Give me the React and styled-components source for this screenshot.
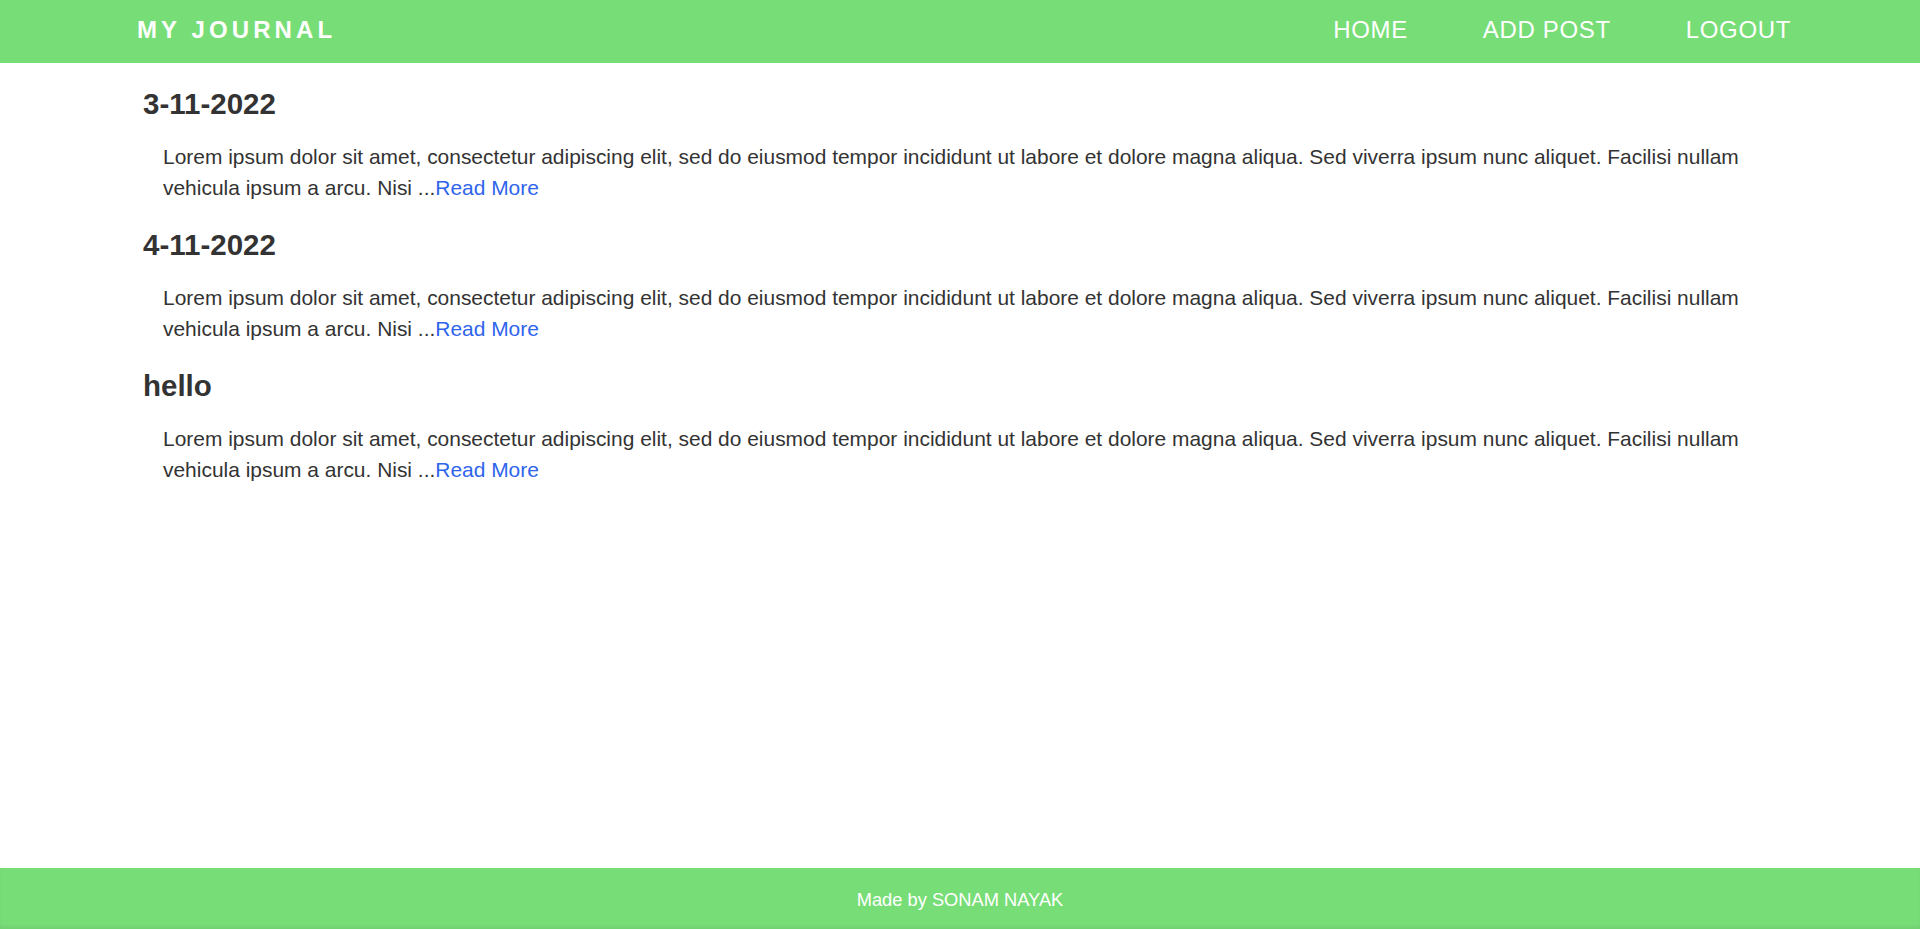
import React from "react";
import styled, { createGlobalStyle } from "styled-components";

const GlobalStyle = createGlobalStyle`
  * {
    box-sizing: border-box;
  }
  body {
    margin: 0;
    font-family: "Liberation Sans", Arial, sans-serif;
    color: #333;
    background: #fff;
  }
`;

const Page = styled.div`
  display: flex;
  flex-direction: column;
  min-height: 100vh;
`;

const Header = styled.header`
  height: 63px;
  background: #77dd77;
  display: flex;
  align-items: center;
  justify-content: space-between;
  padding: 0 129px 3px 137px;
`;

const Logo = styled.div`
  color: #fff;
  font-size: 24px;
  font-weight: 700;
  letter-spacing: 4.1px;
  text-transform: uppercase;
`;

const Nav = styled.nav`
  display: flex;
  gap: 75px;
`;

const NavLink = styled.a`
  color: #fff;
  font-size: 24px;
  letter-spacing: 0.65px;
  text-decoration: none;
  text-transform: uppercase;
  cursor: pointer;
`;

const Main = styled.main`
  flex: 1;
  padding: 24px 143px 0 143px;
`;

const Post = styled.article`
  margin-bottom: 24px;
`;

const Title = styled.h2`
  margin: 0 0 20px;
  font-size: 29.5px;
  line-height: 34px;
  font-weight: 700;
  color: #333;
`;

const Body = styled.p`
  margin: 0 0 0 20px;
  font-size: 20.95px;
  line-height: 31.4px;
  color: #333;
`;

const ReadMore = styled.a`
  color: #2f64ec;
  text-decoration: none;
  cursor: pointer;
`;

const Footer = styled.footer`
  height: 61px;
  padding-top: 3px;
  background: #77dd77;
  display: flex;
  align-items: center;
  justify-content: center;
  color: #fff;
  font-size: 18.3px;
  box-shadow: inset 0 -3px 3px rgba(0, 0, 0, 0.05);
`;

const lorem =
  "Lorem ipsum dolor sit amet, consectetur adipiscing elit, sed do eiusmod tempor incididunt ut labore et dolore magna aliqua. Sed viverra ipsum nunc aliquet. Facilisi nullam vehicula ipsum a arcu. Nisi ...";

const posts = [
  { title: "3-11-2022", content: lorem },
  { title: "4-11-2022", content: lorem },
  { title: "hello", content: lorem },
];

const App = () => {
  return (
    <>
      <GlobalStyle />
      <Page>
        <Header>
          <Logo>My Journal</Logo>
          <Nav>
            <NavLink>Home</NavLink>
            <NavLink>Add Post</NavLink>
            <NavLink>Logout</NavLink>
          </Nav>
        </Header>
        <Main>
          {posts.map((post, index) => (
            <Post key={index}>
              <Title>{post.title}</Title>
              <Body>
                {post.content}
                <ReadMore>Read More</ReadMore>
              </Body>
            </Post>
          ))}
        </Main>
        <Footer>Made by SONAM NAYAK</Footer>
      </Page>
    </>
  );
};

export default App;
